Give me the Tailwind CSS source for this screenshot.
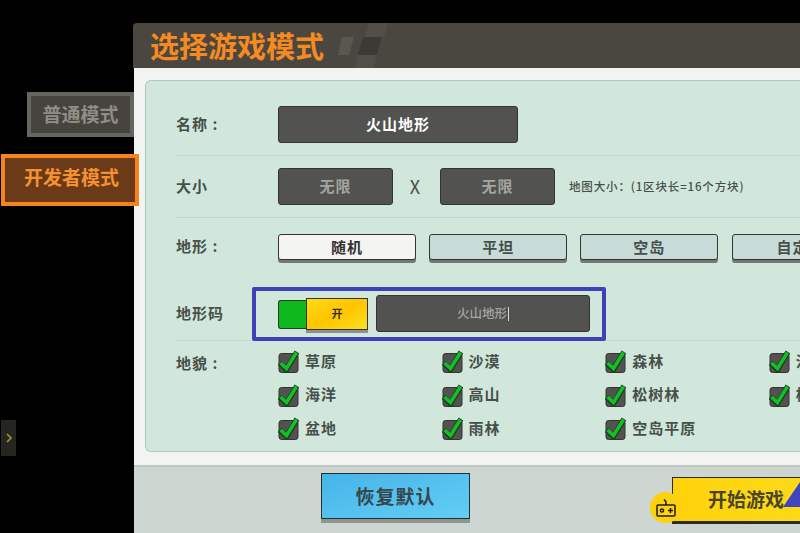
<!DOCTYPE html>
<html lang="zh">
<head>
    <meta charset="UTF-8">
    <title>选择游戏模式</title>
    <script src="https://cdn.jsdelivr.net/npm/@tailwindcss/browser@4"></script>
</head>
<body class="bg-black">
    <div class="relative flex w-[800px] h-[533px] overflow-hidden bg-black font-['Noto_Sans_CJK_SC','Noto_Sans',sans-serif]">

        <!-- Mode tabs -->
        <div class="relative z-10 w-[134px] shrink-0 pt-[92px]">
            <div class="ml-[27px] flex h-[45px] w-[107px] items-center justify-center border-4 border-[#666660] bg-[#47443f] pb-[3px] text-[19px] leading-none font-bold text-[#8e8d86]">普通模式</div>
            <div class="mt-[17px] ml-[1px] flex h-[52px] w-[138px] items-center justify-center border-4 border-[#f5831f] bg-[#6b3b18] pb-[7px] pl-[3px] text-[19px] leading-none font-bold text-[#f59230]">开发者模式</div>
        </div>

        <!-- Main panel -->
        <div class="flex w-[666px] shrink-0 flex-col pt-[23px]">
            <div class="relative -ml-px flex h-[45px] shrink-0 items-center overflow-hidden rounded-tl-sm bg-[#4a4740] pl-[17px]">
                <h1 class="text-[29px] leading-none font-bold text-[#f58b20]">选择游戏模式</h1>
                <svg class="ml-[14px] h-[45px] w-[50px]" viewBox="0 0 50 45">
                    <polygon points="4,14 16,14 11,32 0,32" fill="#5a5750"/>
                    <polygon points="25,14 44,14 39,32 20,32" fill="#3d3a35"/>
                    <polygon points="31,0 50,0 46,14 27,14" fill="#524f48"/>
                    <polygon points="20,32 39,32 36,45 17,45" fill="#524f48"/>
                </svg>
            </div>

            <div class="flex h-[397px] shrink-0 flex-col bg-[#f1f4f0] pt-3 pb-[13px] pl-[11px]">
                <div class="flex min-h-0 flex-1 flex-col rounded-l-md border border-r-0 border-[#afc9ba] bg-[#d2e7db] pl-[30px] text-[#46504a]">

                    <!-- Name -->
                    <div class="flex h-[75px] shrink-0 items-center border-b border-[#c2d8cb] pt-[13px]">
                        <span class="w-[102px] shrink-0 text-[15px] font-bold tracking-[1px] whitespace-nowrap">名称 :</span>
                        <div class="flex h-[37px] w-[240px] items-center justify-center rounded-[3px] border border-[#34352f] bg-[#525350] text-[15px] font-bold tracking-[1px] text-white">火山地形</div>
                    </div>

                    <!-- Size -->
                    <div class="flex h-[62px] shrink-0 items-center border-b border-[#c2d8cb]">
                        <span class="w-[102px] shrink-0 text-[15px] font-bold tracking-[1px]">大小</span>
                        <div class="flex h-[37px] w-[115px] items-center justify-center rounded-[3px] border border-[#34352f] bg-[#525350] text-[15px] font-bold tracking-[1px] text-[#a4a5a1]">无限</div>
                        <span class="w-[47px] pr-[3px] text-center text-[18px]">X</span>
                        <div class="flex h-[37px] w-[115px] items-center justify-center rounded-[3px] border border-[#34352f] bg-[#525350] text-[15px] font-bold tracking-[1px] text-[#a4a5a1]">无限</div>
                        <span class="ml-[14px] text-[11.5px] font-medium tracking-[0.85px] whitespace-nowrap">地图大小：(1区块长=16个方块)</span>
                    </div>

                    <!-- Terrain -->
                    <div class="flex h-[69px] shrink-0 items-start pt-[16px]">
                        <span class="w-[102px] shrink-0 pt-[1px] text-[15px] font-bold tracking-[1px] whitespace-nowrap">地形 :</span>
                        <div class="flex gap-[13.2px]">
                            <div class="flex h-[26px] w-[138px] shrink-0 items-center justify-center rounded-[3px] border border-[#33352f] bg-[#f4f5f2] text-[15px] font-bold tracking-[1px] text-[#333] shadow-[0_3px_0_#737873]">随机</div>
                            <div class="flex h-[26px] w-[138px] shrink-0 items-center justify-center rounded-[3px] border border-[#33352f] bg-[#c7dcd8] text-[15px] font-bold tracking-[1px] shadow-[0_3px_0_#737873]">平坦</div>
                            <div class="flex h-[26px] w-[138px] shrink-0 items-center justify-center rounded-[3px] border border-[#33352f] bg-[#c7dcd8] text-[15px] font-bold tracking-[1px] shadow-[0_3px_0_#737873]">空岛</div>
                            <div class="flex h-[26px] w-[138px] shrink-0 items-center justify-center rounded-[3px] border border-[#33352f] bg-[#c7dcd8] text-[15px] font-bold tracking-[1px] shadow-[0_3px_0_#737873]">自定义</div>
                        </div>
                    </div>

                    <!-- Terrain code -->
                    <div class="flex h-[54px] shrink-0 items-center border-b border-[#c2d8cb]">
                        <span class="w-[76px] shrink-0 text-[15px] font-bold tracking-[1px]">地形码</span>
                        <div class="flex h-[54px] w-[354px] items-center rounded-[2px] border-4 border-[#3c41b8] pl-[22px]">
                            <div class="flex items-start">
                                <div class="mt-[2px] h-[29px] w-[29px] rounded-l-[3px] border border-r-0 border-[#2a3a2a] bg-[#0fb81c]"></div>
                                <div class="-ml-px flex h-[32px] w-[62px] items-center justify-center border border-[#33322a] bg-gradient-to-br from-[#ffdc12] via-[#ffc400] to-[#f8e21a] text-[11px] font-bold text-[#3a3320] shadow-[0_3px_0_#8e918a]">开</div>
                            </div>
                            <div class="ml-2 flex h-[37px] w-[214px] items-center justify-center rounded-[3px] border border-[#34352f] bg-[#525350] text-[12.5px] font-medium text-[#a4a5a1]">火山地形<span class="ml-px h-[14px] w-px bg-[#d8d8d4]"></span></div>
                        </div>
                    </div>

                    <!-- Biomes -->
                    <div class="flex flex-1 pt-[9px]">
                        <span class="w-[102px] shrink-0 pt-[2px] text-[15px] font-bold tracking-[1px] whitespace-nowrap">地貌 :</span>
                        <div class="grid w-[680px] shrink-0 grid-cols-[163.6px_163.6px_163.6px_163.6px] auto-rows-[33.5px] text-[15px] font-bold tracking-[1px]">
                            <div class="flex h-[22px] items-center gap-[6px]"><svg class="h-[24px] w-[21px] shrink-0" viewBox="0 0 21 24"><rect x="1" y="4.5" width="19" height="19" rx="2.5" fill="#525350" stroke="#33352f"/><path d="M1.5 14l7 6.5L19 3" fill="none" stroke="#1f3d22" stroke-width="5.5"/><path d="M2.5 14l6 5.5L18.5 3.5" fill="none" stroke="#12c125" stroke-width="3.5"/></svg>草原</div>
                            <div class="flex h-[22px] items-center gap-[6px]"><svg class="h-[24px] w-[21px] shrink-0" viewBox="0 0 21 24"><rect x="1" y="4.5" width="19" height="19" rx="2.5" fill="#525350" stroke="#33352f"/><path d="M1.5 14l7 6.5L19 3" fill="none" stroke="#1f3d22" stroke-width="5.5"/><path d="M2.5 14l6 5.5L18.5 3.5" fill="none" stroke="#12c125" stroke-width="3.5"/></svg>沙漠</div>
                            <div class="flex h-[22px] items-center gap-[6px]"><svg class="h-[24px] w-[21px] shrink-0" viewBox="0 0 21 24"><rect x="1" y="4.5" width="19" height="19" rx="2.5" fill="#525350" stroke="#33352f"/><path d="M1.5 14l7 6.5L19 3" fill="none" stroke="#1f3d22" stroke-width="5.5"/><path d="M2.5 14l6 5.5L18.5 3.5" fill="none" stroke="#12c125" stroke-width="3.5"/></svg>森林</div>
                            <div class="flex h-[22px] items-center gap-[6px]"><svg class="h-[24px] w-[21px] shrink-0" viewBox="0 0 21 24"><rect x="1" y="4.5" width="19" height="19" rx="2.5" fill="#525350" stroke="#33352f"/><path d="M1.5 14l7 6.5L19 3" fill="none" stroke="#1f3d22" stroke-width="5.5"/><path d="M2.5 14l6 5.5L18.5 3.5" fill="none" stroke="#12c125" stroke-width="3.5"/></svg>沼泽</div>
                            <div class="flex h-[22px] items-center gap-[6px]"><svg class="h-[24px] w-[21px] shrink-0" viewBox="0 0 21 24"><rect x="1" y="4.5" width="19" height="19" rx="2.5" fill="#525350" stroke="#33352f"/><path d="M1.5 14l7 6.5L19 3" fill="none" stroke="#1f3d22" stroke-width="5.5"/><path d="M2.5 14l6 5.5L18.5 3.5" fill="none" stroke="#12c125" stroke-width="3.5"/></svg>海洋</div>
                            <div class="flex h-[22px] items-center gap-[6px]"><svg class="h-[24px] w-[21px] shrink-0" viewBox="0 0 21 24"><rect x="1" y="4.5" width="19" height="19" rx="2.5" fill="#525350" stroke="#33352f"/><path d="M1.5 14l7 6.5L19 3" fill="none" stroke="#1f3d22" stroke-width="5.5"/><path d="M2.5 14l6 5.5L18.5 3.5" fill="none" stroke="#12c125" stroke-width="3.5"/></svg>高山</div>
                            <div class="flex h-[22px] items-center gap-[6px]"><svg class="h-[24px] w-[21px] shrink-0" viewBox="0 0 21 24"><rect x="1" y="4.5" width="19" height="19" rx="2.5" fill="#525350" stroke="#33352f"/><path d="M1.5 14l7 6.5L19 3" fill="none" stroke="#1f3d22" stroke-width="5.5"/><path d="M2.5 14l6 5.5L18.5 3.5" fill="none" stroke="#12c125" stroke-width="3.5"/></svg>松树林</div>
                            <div class="flex h-[22px] items-center gap-[6px]"><svg class="h-[24px] w-[21px] shrink-0" viewBox="0 0 21 24"><rect x="1" y="4.5" width="19" height="19" rx="2.5" fill="#525350" stroke="#33352f"/><path d="M1.5 14l7 6.5L19 3" fill="none" stroke="#1f3d22" stroke-width="5.5"/><path d="M2.5 14l6 5.5L18.5 3.5" fill="none" stroke="#12c125" stroke-width="3.5"/></svg>核林</div>
                            <div class="flex h-[22px] items-center gap-[6px]"><svg class="h-[24px] w-[21px] shrink-0" viewBox="0 0 21 24"><rect x="1" y="4.5" width="19" height="19" rx="2.5" fill="#525350" stroke="#33352f"/><path d="M1.5 14l7 6.5L19 3" fill="none" stroke="#1f3d22" stroke-width="5.5"/><path d="M2.5 14l6 5.5L18.5 3.5" fill="none" stroke="#12c125" stroke-width="3.5"/></svg>盆地</div>
                            <div class="flex h-[22px] items-center gap-[6px]"><svg class="h-[24px] w-[21px] shrink-0" viewBox="0 0 21 24"><rect x="1" y="4.5" width="19" height="19" rx="2.5" fill="#525350" stroke="#33352f"/><path d="M1.5 14l7 6.5L19 3" fill="none" stroke="#1f3d22" stroke-width="5.5"/><path d="M2.5 14l6 5.5L18.5 3.5" fill="none" stroke="#12c125" stroke-width="3.5"/></svg>雨林</div>
                            <div class="flex h-[22px] items-center gap-[6px]"><svg class="h-[24px] w-[21px] shrink-0" viewBox="0 0 21 24"><rect x="1" y="4.5" width="19" height="19" rx="2.5" fill="#525350" stroke="#33352f"/><path d="M1.5 14l7 6.5L19 3" fill="none" stroke="#1f3d22" stroke-width="5.5"/><path d="M2.5 14l6 5.5L18.5 3.5" fill="none" stroke="#12c125" stroke-width="3.5"/></svg>空岛平原</div>
                        </div>
                    </div>
                </div>
            </div>

            <!-- Footer -->
            <div class="flex min-h-0 flex-1 items-start border-t-2 border-[#bfc7c1] bg-[#ced6d1] pl-[187px]">
                <button class="mt-[6px] flex h-[46px] w-[149px] shrink-0 items-center justify-center border border-[#23302f] bg-gradient-to-br from-[#45b5e8] to-[#63cdf5] text-[19px] font-bold tracking-[1px] text-[#37474c] shadow-[0_4px_0_#8b9692]">恢复默认</button>
                <button class="relative mt-[10px] ml-[202px] flex h-[47px] w-[160px] shrink-0 items-center overflow-hidden border border-[#2b2b20] border-b-[3px] bg-gradient-to-r from-[#ffd20a] to-[#fbdc1a] pl-[35px] text-[19px] font-bold text-[#4a4528]">开始游戏
                    <svg class="absolute top-[4px] left-[110px] h-[25px] w-[17px]" viewBox="0 0 17 25"><polygon points="0,25 17,0 17,25" fill="#3f45bd"/></svg>
                </button>
            </div>
        </div>

        <!-- Overlays -->
        <div class="absolute top-[420px] left-[1px] flex h-[36px] w-[15px] items-center justify-center bg-[#252522]">
            <svg class="h-[12px] w-[8px]" viewBox="0 0 8 12"><path d="M2 2l4 4-4 4" fill="none" stroke="#b39a2e" stroke-width="1.5"/></svg>
        </div>
        <div class="absolute top-[492px] left-[650px] flex h-[31px] w-[31px] items-center justify-center rounded-full bg-[#fdd20c]">
            <svg class="h-[22px] w-[22px]" viewBox="0 0 22 22" fill="none" stroke="#1f1c10" stroke-width="1.5"><path d="M11 8V5.5c0-1.5-1-2-2-3"/><rect x="2" y="8" width="18" height="11" rx="1"/><circle cx="7" cy="13.5" r="1.6"/><path d="M13 13.5h5M15.5 11v5"/></svg>
        </div>
    </div>
</body>
</html>
